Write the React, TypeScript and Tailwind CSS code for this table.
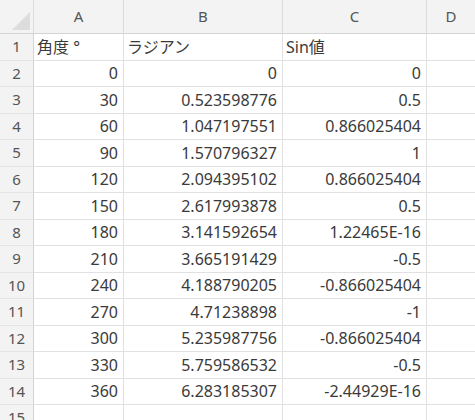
import React from "react";

const rows: [string, string, string, string][] = [
  ["1", "角度 °", "ラジアン", "Sin値"],
  ["2", "0", "0", "0"],
  ["3", "30", "0.523598776", "0.5"],
  ["4", "60", "1.047197551", "0.866025404"],
  ["5", "90", "1.570796327", "1"],
  ["6", "120", "2.094395102", "0.866025404"],
  ["7", "150", "2.617993878", "0.5"],
  ["8", "180", "3.141592654", "1.22465E-16"],
  ["9", "210", "3.665191429", "-0.5"],
  ["10", "240", "4.188790205", "-0.866025404"],
  ["11", "270", "4.71238898", "-1"],
  ["12", "300", "5.235987756", "-0.866025404"],
  ["13", "330", "5.759586532", "-0.5"],
  ["14", "360", "6.283185307", "-2.44929E-16"],
  ["15", "", "", ""],
];

export default function App() {
  return (
    <div
      className="w-[475px] h-[420px] overflow-hidden bg-white text-[#3a3a3a]"
      style={{ fontFamily: '"Noto Sans", "Noto Sans CJK JP", sans-serif' }}
    >
      <div className="flex h-[34px] bg-[#f3f3f3] border-b border-[#d4d4d4] text-[15px] text-[#555]">
        <div className="w-[34px] shrink-0 relative border-r border-[#dcdcdc]">
          <div className="absolute right-[3px] bottom-[3px] w-0 h-0 border-l-[18px] border-l-transparent border-b-[18px] border-b-[#dcdcdc]" />
        </div>
        <div className="w-[90px] shrink-0 flex items-center justify-center border-r border-[#dcdcdc]">A</div>
        <div className="w-[159px] shrink-0 flex items-center justify-center border-r border-[#dcdcdc]">B</div>
        <div className="w-[144px] shrink-0 flex items-center justify-center border-r border-[#dcdcdc]">C</div>
        <div className="flex-1 flex items-center justify-center">D</div>
      </div>
      {rows.map((r, i) => {
        const isHeader = i === 0;
        return (
          <div key={i} className="flex h-[26.5px] text-[16px] leading-none">
            <div className="w-[34px] shrink-0 flex items-center justify-center bg-[#f3f3f3] border-r border-[#d4d4d4] border-b border-b-[#e4e4e4] text-[#555] text-[15px]">
              {r[0]}
            </div>
            <div className={`w-[90px] shrink-0 flex items-center border-r border-b border-[#e1e1e1] whitespace-pre ${isHeader ? "justify-start pl-[3px]" : "justify-end pr-[5px]"}`}>
              {r[1]}
            </div>
            <div className={`w-[159px] shrink-0 flex items-center border-r border-b border-[#e1e1e1] ${isHeader ? "justify-start pl-[3px]" : "justify-end pr-[5px]"}`}>
              {r[2]}
            </div>
            <div className={`w-[144px] shrink-0 flex items-center border-r border-b border-[#e1e1e1] ${isHeader ? "justify-start pl-[3px]" : "justify-end pr-[5px]"}`}>
              {r[3]}
            </div>
            <div className="flex-1 border-b border-[#e1e1e1]" />
          </div>
        );
      })}
    </div>
  );
}
